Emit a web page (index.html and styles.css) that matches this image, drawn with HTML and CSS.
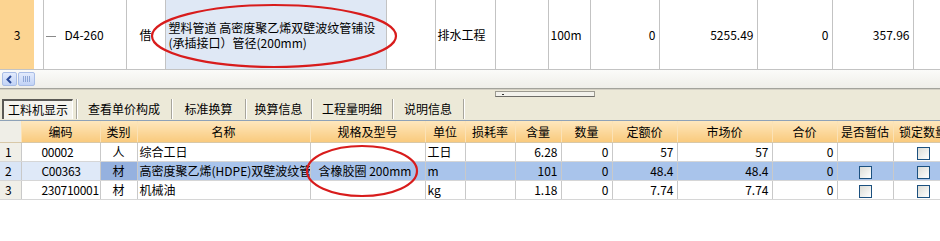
FILE: index.html
```html
<!DOCTYPE html>
<html lang="zh-CN">
<head>
<meta charset="utf-8">
<title>工料机显示</title>
<link rel="stylesheet" href="styles.css">
</head>
<body>
<div class="page">
  <table class="grid-top">
    <colgroup>
      <col style="width:34px"><col style="width:9px"><col style="width:83px"><col style="width:39px">
      <col style="width:221px"><col style="width:49px"><col style="width:60px"><col style="width:53px">
      <col style="width:42px"><col style="width:69px"><col style="width:98px"><col style="width:75px">
      <col style="width:81px"><col style="width:27px">
    </colgroup>
    <tr>
      <td class="rownum-cur">3</td>
      <td></td>
      <td class="code"><span class="tree-line"></span><span>D4-260</span></td>
      <td class="center">借</td>
      <td class="desc"><div class="desc-line">塑料管道 高密度聚乙烯双壁波纹管铺设</div><div class="desc-line">(承插接口）管径(200mm)</div></td>
      <td></td>
      <td class="left">排水工程</td>
      <td></td>
      <td class="left">100m</td>
      <td class="num">0</td>
      <td class="num">5255.49</td>
      <td class="num">0</td>
      <td class="num">357.96</td>
      <td></td>
    </tr>
  </table>
  <div class="hscroll">
    <div class="sb-btn"><svg width="9" height="9" viewBox="0 0 9 9"><path d="M6 1 L2.5 4.5 L6 8" fill="none" stroke="#2a4a9a" stroke-width="2"/></svg></div>
    <div class="sb-thumb"><span></span><span></span><span></span><span></span></div>
  </div>
  <div class="tabbar">
    <div class="splitter"><span class="dot"></span></div>
    <div class="tab w1"><span class="tab-active">工料机显示</span></div>
    <div class="tab w2">查看单价构成</div>
    <div class="tab w3">标准换算</div>
    <div class="tab w4">换算信息</div>
    <div class="tab w5">工程量明细</div>
    <div class="tab w6">说明信息</div>
  </div>
  <div class="bottom-wrap">
    <table class="grid-bottom">
      <colgroup>
        <col style="width:21px"><col style="width:79px"><col style="width:37px"><col style="width:173px">
        <col style="width:115px"><col style="width:40px"><col style="width:50px"><col style="width:46px">
        <col style="width:51px"><col style="width:65px"><col style="width:95px"><col style="width:65px">
        <col style="width:56px"><col style="width:60px">
      </colgroup>
      <tr class="head">
        <th class="corner"></th><th>编码</th><th>类别</th><th>名称</th><th>规格及型号</th><th>单位</th><th>损耗率</th>
        <th>含量</th><th>数量</th><th>定额价</th><th>市场价</th><th>合价</th><th>是否暂估</th><th>锁定数量</th>
      </tr>
      <tr>
        <td class="rn">1</td><td class="code2">00002</td><td class="center">人</td><td class="left">综合工日</td><td class="spec"></td>
        <td class="left">工日</td><td></td><td class="num">6.28</td><td class="num">0</td><td class="num">57</td><td class="num">57</td><td class="num">0</td>
        <td class="center"></td><td class="center"><span class="cb"></span></td>
      </tr>
      <tr class="sel">
        <td class="rn">2</td><td class="code2">C00363</td><td class="center cur">材</td><td class="left">高密度聚乙烯(HDPE)双壁波纹管</td><td class="spec">含橡胶圈 200mm</td>
        <td class="left">m</td><td></td><td class="num">101</td><td class="num">0</td><td class="num">48.4</td><td class="num">48.4</td><td class="num">0</td>
        <td class="center"><span class="cb"></span></td><td class="center"><span class="cb"></span></td>
      </tr>
      <tr>
        <td class="rn">3</td><td class="code2">230710001</td><td class="center">材</td><td class="left">机械油</td><td class="spec"></td>
        <td class="left">kg</td><td></td><td class="num">1.18</td><td class="num">0</td><td class="num">7.74</td><td class="num">7.74</td><td class="num">0</td>
        <td class="center"><span class="cb"></span></td><td class="center"><span class="cb"></span></td>
      </tr>
    </table>
  </div>
  <svg class="annot" width="940" height="241" viewBox="0 0 940 241">
    <ellipse cx="274" cy="36" rx="122" ry="31" fill="none" stroke="#d81c1c" stroke-width="2.2"/>
    <ellipse cx="362" cy="171" rx="55" ry="25" fill="none" stroke="#d81c1c" stroke-width="2.2"/>
  </svg>
</div>
</body>
</html>
```
FILE: styles.css
```css
html, body {
  margin: 0;
  padding: 0;
  background: #ffffff;
}
body {
  width: 940px;
  height: 241px;
  overflow: hidden;
  font-family: "Noto Sans CJK SC", "DejaVu Sans", sans-serif;
  font-size: 12px;
  color: #000;
}
.page {
  position: relative;
  width: 940px;
  height: 241px;
  overflow: hidden;
}
table {
  border-collapse: collapse;
  table-layout: fixed;
}
td, th {
  padding: 0;
  white-space: nowrap;
  overflow: hidden;
  font-weight: normal;
}

/* top grid */
.grid-top {
  width: 940px;
}
.grid-top td {
  height: 69px;
  border-right: 1px solid #c3c3c3;
  border-bottom: 1px solid #c3c3c3;
  vertical-align: middle;
  line-height: 16px;
}
.grid-top td.rownum-cur {
  background: #fcd491;
  text-align: center;
  border-right: none;
}
.grid-top .code {
  padding-left: 2px;
}
.tree-line {
  display: inline-block;
  width: 10px;
  height: 1px;
  background: #8a8a8a;
  vertical-align: middle;
  margin-right: 9px;
}
.center { text-align: center; }
.left { text-align: left; padding-left: 2px !important; }
.num { text-align: right; padding-right: 3px !important; }
.grid-top .desc {
  background: #dfe8f5;
  padding-left: 3px;
}
.desc-line {
  height: 15px;
  line-height: 15px;
  white-space: nowrap;
}

/* horizontal scroll bar */
.hscroll {
  height: 18px;
  border-bottom: 1px solid #a3a39c;
  background: linear-gradient(#fbfbf9, #efeee9);
  display: flex;
  align-items: center;
  padding-left: 2px;
  gap: 1px;
}
.sb-btn, .sb-thumb {
  height: 14px;
  box-sizing: border-box;
  border: 1px solid #a9bde6;
  border-radius: 2px;
  background: linear-gradient(#e3ebfc, #c2d3f6);
  display: flex;
  align-items: center;
  justify-content: center;
}
.sb-btn { width: 15px; }
.sb-thumb { width: 17px; gap: 1px; }
.sb-thumb span {
  width: 1px;
  height: 6px;
  background: #8ea6d6;
}

/* tab bar */
.tabbar {
  position: relative;
  height: 31px;
  border-top: 1px solid #d4d0c4;
  background: #ece9d8;
  display: flex;
  align-items: flex-end;
  padding-bottom: 1px;
  box-sizing: border-box;
}
.splitter {
  position: absolute;
  left: 495px;
  top: 1px;
  width: 100px;
  height: 6px;
  box-sizing: border-box;
  border: 1px solid #9c9a90;
  border-bottom-color: #6e6d68;
  background: #f3f2ec;
}
.splitter .dot {
  position: absolute;
  left: 6px;
  top: 2px;
  width: 2px;
  height: 1px;
  background: #333;
}
.tab {
  height: 20px;
  line-height: 20px;
  text-align: center;
  border-right: 1px solid #a7a59c;
  box-shadow: 1px 0 0 #ffffff;
  box-sizing: border-box;
}
.tab.w1 {
  width: 77px;
  padding-left: 2px;
  display: flex;
}
.tab-active {
  display: block;
  width: 71px;
  height: 20px;
  line-height: 18px;
  box-sizing: border-box;
  background: #f4f3ed;
  border-top: 2px solid #5a5955;
  border-left: 2px solid #5a5955;
  border-right: 1px solid #ffffff;
  text-align: center;
}
.tab.w2 { width: 95px; }
.tab.w3 { width: 74px; }
.tab.w4 { width: 66px; }
.tab.w5 { width: 81px; }
.tab.w6 { width: 71px; }

/* bottom grid */
.bottom-wrap {
  width: 940px;
  overflow: hidden;
  border-top: 1px solid #8ea2b8;
}
.grid-bottom {
  width: 953px;
}
.grid-bottom th {
  height: 21px;
  background: linear-gradient(#fee7bd, #f9ca7d);
  border-right: 1px solid #fbe2b6;
  border-bottom: 1px solid #d8c8a8;
  text-align: center;
  font-size: 12px;
  line-height: 21px;
}
.grid-bottom th.corner {
  background: #efeee7;
}
.grid-bottom td {
  height: 18px;
  line-height: 18px;
  border-right: 1px solid #c9c9c9;
  border-bottom: 1px solid #d6d6d6;
}
.grid-bottom td.rn {
  background: #f0efe8;
  padding-left: 5px;
}
.grid-bottom td.code2 {
  padding-left: 20px;
  letter-spacing: -0.3px;
}
.grid-bottom td.spec {
  padding-left: 8px;
}
.grid-bottom tr.sel td {
  background: #a9c4eb;
}
.grid-bottom tr.sel td.rn {
  background: #d9e5f6;
}
.grid-bottom tr.sel td.code2 {
  background: #dfe9f8;
}
.grid-bottom tr.sel td.cur {
  background: #95b1df;
}
.cb {
  display: inline-block;
  width: 13px;
  height: 13px;
  box-sizing: border-box;
  border: 1px solid #1c5180;
  background: linear-gradient(135deg, #dcdcd6, #ffffff);
  vertical-align: middle;
}

/* annotation overlay */
.annot {
  position: absolute;
  left: 0;
  top: 0;
  pointer-events: none;
}
```
